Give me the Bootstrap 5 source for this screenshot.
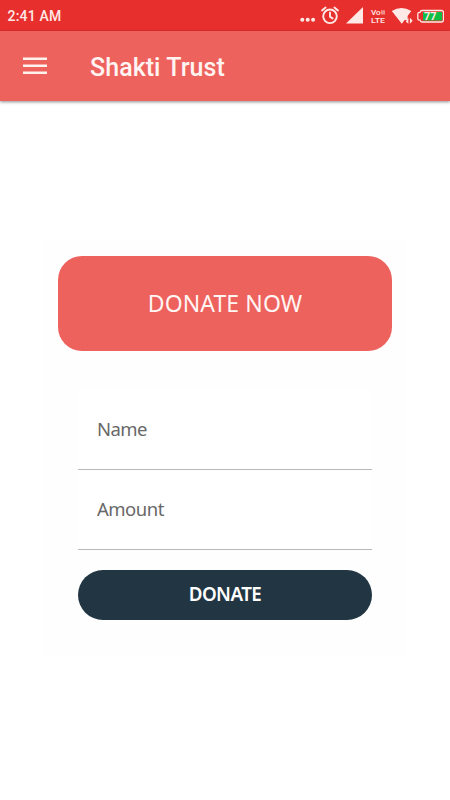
<!DOCTYPE html>
<html lang="en">
<head>
<meta charset="utf-8">
<meta name="viewport" content="width=device-width, initial-scale=1">
<title>Shakti Trust</title>
<link href="https://cdn.jsdelivr.net/npm/bootstrap@5.3.0/dist/css/bootstrap.min.css" rel="stylesheet">
<style>
body { font-family: "Noto Sans", sans-serif; height: 800px; overflow: hidden; background: #fff; }
.status-strip { height: 31px; background: #e7302d; color: #ffe9e6; font: 500 14px/31px Roboto, sans-serif; letter-spacing: .2px; padding: 1px 6px 0 7.500px; }
.status-strip svg { letter-spacing: 0; }
.app-bar { height: 70px; background: #ee625e; box-shadow: 0 1px 3px rgba(0,0,0,.45); padding: 0 23px; }
.app-title { font: 500 25px/30px Roboto, sans-serif; color: #fff4f2; margin-left: 43px; padding-top: 4px; letter-spacing: .05px; }
.donate-panel { width: 362px; height: 415px; margin: 140px auto 0; background: #fefefe; padding: 15px 14px 0; }
.donate-heading { height: 95px; border-radius: 24px; background: #ee625e; color: #fff5f3; font-size: 23px; letter-spacing: .1px; }
.donate-form { margin: 39px 20px 0; }
.donate-form .form-control { height: 80px; padding: 0 19px 2px; font-size: 18.500px; letter-spacing: -.6px; color: #666; background: #fff; --bs-border-color: #b8b8b8; }
.donate-form .amount-field { letter-spacing: -.5px; }
.donate-form .form-control::placeholder { color: #686868; opacity: 1; }
.donate-submit { height: 50px; margin-top: 20px; background: #213543; font-size: 18.800px; font-weight: 600; letter-spacing: -.55px; }
.donate-submit span { padding-bottom: 2px; }
</style>
<script src="https://cdn.jsdelivr.net/npm/bootstrap@5.3.0/dist/js/bootstrap.bundle.min.js"></script>
</head>
<body>
<header>
  <div class="status-strip d-flex justify-content-between">
    <span>2:41 AM</span>
    <svg width="146" height="30" viewBox="298 0 146 30" fill="#ffe9e6">
      <circle cx="302.300" cy="18.700" r="2"/><circle cx="307.700" cy="18.700" r="2"/><circle cx="313.100" cy="18.700" r="2"/>
      <g fill="none" stroke="#ffe9e6" stroke-width="1.900" stroke-linecap="round">
        <circle cx="330" cy="15.300" r="6.800"/><path d="M330 11.500V15.700l2.600 1.700M322 9.500l3.600-3M338 9.500l-3.600-3"/>
      </g>
      <path d="M363 6V22.500h-17z"/>
      <text x="371" y="13.800" font-family="Roboto, sans-serif" font-size="7.500" font-weight="500" textLength="9.800" lengthAdjust="spacingAndGlyphs">Vo</text>
      <path d="M381.500 9.200h1v4.400h-1zM383.500 9.200h1v4.400h-1z"/>
      <text x="371" y="21.700" font-family="Roboto, sans-serif" font-size="8" font-weight="500" textLength="14" lengthAdjust="spacingAndGlyphs">LTE</text>
      <path d="M391.800 10Q401.500 3.800 411.300 10L407.600 15v3.900h-3L401.800 22.700z"/>
      <path d="M408.400 16.800v6L405.800 20.500M409.900 22.800v-6l2.800 3z"/>
      <path d="M422 9.500h19.500q2 0 2 2v7.500q0 2-2 2H422q-1.500 0-2-1.800h-.5q-1.700 0-1.700-1.700v-4.500q0-1.700 1.700-1.700h.5q.5-1.800 2-1.800z" fill="none" stroke="#ffe9e6" stroke-width="1.300"/>
      <path d="M423 11h18.300q.8 0 .8.800v7q0 .8-.8.800H423z" fill="#12bd43"/>
      <text x="424" y="19.300" font-family="Roboto, sans-serif" font-size="11" font-weight="700" textLength="12.500" lengthAdjust="spacingAndGlyphs">77</text>
    </svg>
  </div>
  <nav class="app-bar d-flex align-items-center">
    <svg width="24" height="18" viewBox="0 0 24 18" fill="#fff1ee"><path d="M0 .5h24v2.600H0zM0 7.500h24v2.600H0zM0 14.500h24v2.600H0z"/></svg>
    <h1 class="app-title mb-0">Shakti Trust</h1>
  </nav>
</header>
<main class="donate-panel">
  <h2 class="donate-heading d-flex align-items-center justify-content-center mb-0 fw-normal">DONATE NOW</h2>
  <form class="donate-form">
    <input class="form-control border-0 border-bottom rounded-0" type="text" placeholder="Name" aria-label="Name">
    <input class="form-control amount-field border-0 border-bottom rounded-0" type="text" placeholder="Amount" aria-label="Amount">
    <button class="donate-submit btn w-100 rounded-pill border-0 text-white d-flex align-items-center justify-content-center p-0" type="button"><span>DONATE</span></button>
  </form>
</main>
</body>
</html>
